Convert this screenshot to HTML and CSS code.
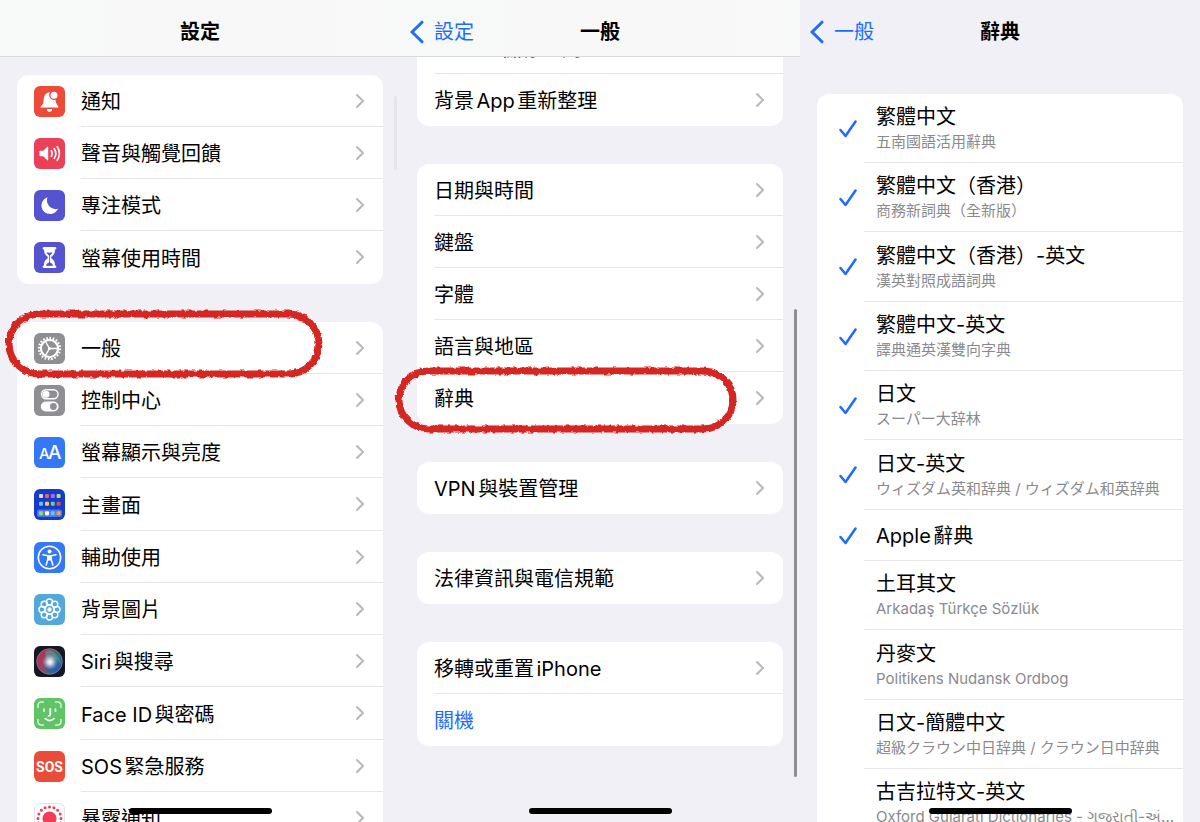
FILE: index.html
```html
<!DOCTYPE html>
<html lang="zh-Hant">
<head>
  <meta charset="UTF-8" />
  <meta name="viewport" content="width=device-width, initial-scale=1.0"/>
  <title>設定 - 辭典</title>
  <link rel="stylesheet" href="styles.css">
</head>
<body>

  <!-- shared shapes -->
  <svg class="defs" aria-hidden="true">
    <symbol id="chevron" viewBox="0 0 10 16"><path d="M2 2l6 6-6 6" fill="none" stroke="#b8b8bc" stroke-width="2" stroke-linecap="round" stroke-linejoin="round"/></symbol>
    <symbol id="back" viewBox="0 0 14 24"><path d="M12 2.2L2 12l10 9.8" fill="none" stroke="#1a6dff" stroke-width="3" stroke-linecap="round" stroke-linejoin="round"/></symbol>
    <symbol id="tick" viewBox="0 0 18 18"><path d="M1.500 10l5 6L16.500 1.500" fill="none" stroke="#1a6dff" stroke-width="2.500" stroke-linecap="round" stroke-linejoin="round"/></symbol>
    <filter id="crayon" x="-5%" y="-15%" width="110%" height="130%">
      <feTurbulence type="fractalNoise" baseFrequency="0.22" numOctaves="2" seed="4" result="noise"/>
      <feDisplacementMap in="SourceGraphic" in2="noise" scale="4" xChannelSelector="R" yChannelSelector="G"/>
    </filter>
  </svg>

  <div class="screens">

    <!-- Settings -->
    <section class="screen">
      <header class="bar bar-tint">
        <h1>設定</h1>
      </header>
      <div class="content content-settings">
        <nav class="card with-icons">
          <a class="row" href="#">
            <svg class="icon red" viewBox="0 0 31 31"><path d="M6.500 21.500c0-1.200 2.800-2.500 3-6C9.700 9.500 11.500 6.700 16 6.200a5 5 0 0 0 5.500 7.600c.3 4.500 3 6.200 3 7.700z" fill="#fff"/><circle cx="20" cy="9.300" r="3.500" fill="#fff"/><path d="M12.800 23h5.400a2.700 2.700 0 0 1-5.400 0z" fill="#fff"/></svg>
            <span class="label">通知<svg class="chevron"><use href="#chevron"/></svg></span>
          </a>
          <a class="row" href="#">
            <svg class="icon pink" viewBox="0 0 31 31"><path d="M5.500 13.500q0-.8.800-.8h3l4-3.900q.9-.7.900.4v12.600q0 1.100-.9.400l-4-3.900h-3q-.8 0-.8-.8z" fill="#fff"/><path d="M17.300 12.700q1.700 2.800 0 5.600M20.300 10.700q3 4.800 0 9.600M23.300 8.700q4.200 6.800 0 13.600" fill="none" stroke="#fff" stroke-width="1.700" stroke-linecap="round"/></svg>
            <span class="label">聲音與觸覺回饋<svg class="chevron"><use href="#chevron"/></svg></span>
          </a>
          <a class="row" href="#">
            <svg class="icon purple" viewBox="0 0 31 31"><path d="M13.500 7.200A8.600 8.600 0 1 0 24 18.800 8.800 8.800 0 0 1 13.500 7.200z" fill="#fff"/></svg>
            <span class="label">專注模式<svg class="chevron"><use href="#chevron"/></svg></span>
          </a>
          <a class="row" href="#">
            <svg class="icon purple" viewBox="0 0 31 31"><path d="M10 5h11q1.400 0 1.400 1.200T21 7.500c0 4-1.300 5.500-3.700 7.200v1.600c2.400 1.700 3.700 3.200 3.700 7.200q1.400.1 1.400 1.300T21 26H10q-1.400 0-1.400-1.200T10 23.500c0-4 1.300-5.500 3.700-7.200v-1.600C11.300 13 10 11.500 10 7.500q-1.400-.1-1.400-1.300T10 5z" fill="#fff"/><path d="M12.800 11h5.400L15.500 13.500zM15.500 13v8M12.500 23.500q0-2 3-3 3 1 3 3z" fill="#5553cf" stroke="#5553cf" stroke-width=".8"/></svg>
            <span class="label">螢幕使用時間<svg class="chevron"><use href="#chevron"/></svg></span>
          </a>
        </nav>

        <nav class="card with-icons">
          <a class="row marked" href="#general">
            <svg class="icon gray" viewBox="0 0 31 31"><g fill="none" stroke="#fff"><circle cx="15.500" cy="15.500" r="10.600" stroke-width="2.200" pathLength="40" stroke-dasharray="1 1"/><circle cx="15.500" cy="15.500" r="8.600" stroke-width="2.200"/><path d="M15.500 15.500h8M15.500 15.500l-4-7M15.500 15.500l-4 7" stroke-width="1.500"/></g><circle cx="15.500" cy="15.500" r="1.500" fill="#fff"/></svg>
            <span class="label">一般<svg class="chevron"><use href="#chevron"/></svg></span>
            <svg class="scribble" aria-hidden="true"><rect x="6" y="6" rx="31"/></svg>
          </a>
          <a class="row" href="#">
            <svg class="icon gray" viewBox="0 0 31 31"><rect x="7.500" y="4.700" width="16.500" height="9" rx="4.500" fill="none" stroke="#fff" stroke-width="1.400"/><circle cx="12" cy="9.200" r="3.500" fill="#fff"/><rect x="6.800" y="16.500" width="17.800" height="10" rx="5" fill="#fff"/><circle cx="19.400" cy="21.500" r="3.400" fill="#8e8e93"/></svg>
            <span class="label">控制中心<svg class="chevron"><use href="#chevron"/></svg></span>
          </a>
          <a class="row" href="#">
            <svg class="icon blue" viewBox="0 0 31 31"><text x="5" y="22" font-size="15">A</text><text x="14" y="22" font-size="19">A</text></svg>
            <span class="label">螢幕顯示與亮度<svg class="chevron"><use href="#chevron"/></svg></span>
          </a>
          <a class="row" href="#">
            <svg class="icon navy" viewBox="0 0 31 31">
              <rect x="3" y="20.500" width="25" height="7.500" rx="2" fill="#5577e5"/>
              <g><rect x="5" y="5" width="4" height="4" rx="1" fill="#e8dbe8"/><rect x="11" y="5" width="4" height="4" rx="1" fill="#f0605c"/><rect x="16.800" y="5" width="4" height="4" rx="1" fill="#b565ed"/><rect x="22.600" y="5" width="4" height="4" rx="1" fill="#b7e34c"/>
              <rect x="5" y="12.700" width="4" height="4" rx="1" fill="#63c5f5"/><rect x="11" y="12.700" width="4" height="4" rx="1" fill="#f7cd46"/><rect x="16.800" y="12.700" width="4" height="4" rx="1" fill="#63d684"/><rect x="22.600" y="12.700" width="4" height="4" rx="1" fill="#ee4a3a"/>
              <rect x="5" y="22.200" width="4" height="4" rx="1" fill="#80e66b"/><rect x="11" y="22.200" width="4" height="4" rx="1" fill="#fff"/><rect x="16.800" y="22.200" width="4" height="4" rx="1" fill="#63c5f5"/><rect x="22.600" y="22.200" width="4" height="4" rx="1" fill="#f3a23c"/></g>
            </svg>
            <span class="label">主畫面<svg class="chevron"><use href="#chevron"/></svg></span>
          </a>
          <a class="row" href="#">
            <svg class="icon blue" viewBox="0 0 31 31"><circle cx="15.500" cy="15.500" r="11.200" fill="none" stroke="#fff" stroke-width="1.500"/><circle cx="15.500" cy="9.500" r="2" fill="#fff"/><path d="M9 12.700l4.800 1.100v3.500L12.200 23M22 12.700l-4.800 1.100v3.500l1.600 5.700" fill="none" stroke="#fff" stroke-width="1.500" stroke-linecap="round" stroke-linejoin="round"/><path d="M13.300 13h4.400v5.500h-4.400z" fill="#fff"/></svg>
            <span class="label">輔助使用<svg class="chevron"><use href="#chevron"/></svg></span>
          </a>
          <a class="row" href="#">
            <svg class="icon sky" viewBox="0 0 31 31"><g fill="none" stroke="#fff" stroke-width="1.400"><circle cx="15.500" cy="8" r="3"/><circle cx="20.800" cy="10.200" r="3"/><circle cx="23" cy="15.500" r="3"/><circle cx="20.800" cy="20.800" r="3"/><circle cx="15.500" cy="23" r="3"/><circle cx="10.200" cy="20.800" r="3"/><circle cx="8" cy="15.500" r="3"/><circle cx="10.200" cy="10.200" r="3"/><circle cx="15.500" cy="15.500" r="4.600"/></g><circle cx="15.500" cy="15.500" r="2.200" fill="#fff"/></svg>
            <span class="label">背景圖片<svg class="chevron"><use href="#chevron"/></svg></span>
          </a>
          <a class="row" href="#">
            <svg class="icon siri" viewBox="0 0 31 31">
              <defs>
                <radialGradient id="glow"><stop offset="0" stop-color="#fff"/><stop offset=".35" stop-color="#e6eff5" stop-opacity=".8"/><stop offset="1" stop-color="#8fb5d0" stop-opacity="0"/></radialGradient>
                <linearGradient id="orb" x1="0" y1=".3" x2="1" y2=".7"><stop offset="0" stop-color="#c02a55"/><stop offset=".45" stop-color="#8b4a62"/><stop offset=".7" stop-color="#31747c"/><stop offset="1" stop-color="#2d5aa0"/></linearGradient>
              </defs>
              <circle cx="15.500" cy="15.500" r="12.800" fill="url(#orb)" stroke="#6c8d95" stroke-width=".8"/>
              <path d="M12 5Q17 3 21 7t6 11q-5-7-11-5T12 5z" fill="#54a39a" opacity=".6"/>
              <path d="M9 17q4 3 8 0t10 2q-3 8-10 8-6-2-8-10z" fill="#3156b6" opacity=".65"/>
              <circle cx="16" cy="16" r="8" fill="url(#glow)"/>
            </svg>
            <span class="label">Siri與搜尋<svg class="chevron"><use href="#chevron"/></svg></span>
          </a>
          <a class="row" href="#">
            <svg class="icon green" viewBox="0 0 31 31"><g fill="none" stroke="#fff" stroke-width="1.500" stroke-linecap="round" stroke-linejoin="round"><path stroke="#d9f3da" d="M4 9.500V7.500Q4 4 7.500 4h2M21.500 4h2Q27 4 27 7.500v2M27 21.500v2q0 3.500-3.500 3.500h-2M9.500 27h-2Q4 27 4 23.500v-2"/><path d="M10 11.200v2M21.500 11.200v2M16.300 11v5.500q0 1.500-1.800 1.300M11.300 20.700q4.300 3.800 8.600 0" stroke-width="1.800"/></g></svg>
            <span class="label">Face ID與密碼<svg class="chevron"><use href="#chevron"/></svg></span>
          </a>
          <a class="row" href="#">
            <svg class="icon red" viewBox="0 0 31 31"><text class="sos" x="15.500" y="21" font-size="14" text-anchor="middle">SOS</text></svg>
            <span class="label">SOS緊急服務<svg class="chevron"><use href="#chevron"/></svg></span>
          </a>
          <a class="row" href="#">
            <svg class="icon white" viewBox="0 0 31 31"><circle cx="15.500" cy="15.500" r="7" fill="#ee3e56"/><circle cx="15.500" cy="15.500" r="11.500" fill="none" stroke="#ee3e56" stroke-width="3" stroke-linecap="round" pathLength="160" stroke-dasharray="0 10"/></svg>
            <span class="label">暴露通知<svg class="chevron"><use href="#chevron"/></svg></span>
          </a>
        </nav>
      </div>
      <div class="scrollbar faint"></div>
      <div class="home-indicator"></div>
    </section>

    <!-- General -->
    <section class="screen" id="general">
      <header class="bar bar-tint">
        <a class="back" href="#"><svg><use href="#back"/></svg>設定</a>
        <h1>一般</h1>
      </header>
      <div class="content content-general">
        <nav class="card">
          <a class="row" href="#"><span class="label">iPhone儲存空間<svg class="chevron"><use href="#chevron"/></svg></span></a>
          <a class="row" href="#"><span class="label">背景App重新整理<svg class="chevron"><use href="#chevron"/></svg></span></a>
        </nav>
        <nav class="card">
          <a class="row" href="#"><span class="label">日期與時間<svg class="chevron"><use href="#chevron"/></svg></span></a>
          <a class="row" href="#"><span class="label">鍵盤<svg class="chevron"><use href="#chevron"/></svg></span></a>
          <a class="row" href="#"><span class="label">字體<svg class="chevron"><use href="#chevron"/></svg></span></a>
          <a class="row" href="#"><span class="label">語言與地區<svg class="chevron"><use href="#chevron"/></svg></span></a>
          <a class="row marked" href="#dictionary">
            <span class="label">辭典<svg class="chevron"><use href="#chevron"/></svg></span>
            <svg class="scribble wide" aria-hidden="true"><rect x="6" y="6" rx="30"/></svg>
          </a>
        </nav>
        <nav class="card">
          <a class="row" href="#"><span class="label">VPN與裝置管理<svg class="chevron"><use href="#chevron"/></svg></span></a>
        </nav>
        <nav class="card">
          <a class="row" href="#"><span class="label">法律資訊與電信規範<svg class="chevron"><use href="#chevron"/></svg></span></a>
        </nav>
        <div class="card">
          <a class="row" href="#"><span class="label">移轉或重置iPhone<svg class="chevron"><use href="#chevron"/></svg></span></a>
          <button class="row power" type="button"><span class="label">關機</span></button>
        </div>
      </div>
      <div class="scrollbar"></div>
      <div class="home-indicator"></div>
    </section>

    <!-- Dictionary -->
    <section class="screen" id="dictionary">
      <header class="bar">
        <a class="back" href="#general"><svg><use href="#back"/></svg>一般</a>
        <h1>辭典</h1>
      </header>
      <div class="content content-dictionary">
        <div class="card">
          <label class="dict"><input type="checkbox" checked><svg class="tick"><use href="#tick"/></svg><span class="text">繁體中文<small>五南國語活用辭典</small></span></label>
          <label class="dict"><input type="checkbox" checked><svg class="tick"><use href="#tick"/></svg><span class="text">繁體中文（香港）<small>商務新詞典（全新版）</small></span></label>
          <label class="dict"><input type="checkbox" checked><svg class="tick"><use href="#tick"/></svg><span class="text">繁體中文（香港）-英文<small>漢英對照成語詞典</small></span></label>
          <label class="dict"><input type="checkbox" checked><svg class="tick"><use href="#tick"/></svg><span class="text">繁體中文-英文<small>譯典通英漢雙向字典</small></span></label>
          <label class="dict"><input type="checkbox" checked><svg class="tick"><use href="#tick"/></svg><span class="text">日文<small lang="ja">スーパー大辞林</small></span></label>
          <label class="dict"><input type="checkbox" checked><svg class="tick"><use href="#tick"/></svg><span class="text">日文-英文<small lang="ja">ウィズダム英和辞典 / ウィズダム和英辞典</small></span></label>
          <label class="dict single"><input type="checkbox" checked><svg class="tick"><use href="#tick"/></svg><span class="text">Apple辭典</span></label>
          <label class="dict"><input type="checkbox"><svg class="tick"><use href="#tick"/></svg><span class="text">土耳其文<small>Arkadaş Türkçe Sözlük</small></span></label>
          <label class="dict"><input type="checkbox"><svg class="tick"><use href="#tick"/></svg><span class="text">丹麥文<small>Politikens Nudansk Ordbog</small></span></label>
          <label class="dict"><input type="checkbox"><svg class="tick"><use href="#tick"/></svg><span class="text">日文-簡體中文<small lang="ja">超級クラウン中日辞典 / クラウン日中辞典</small></span></label>
          <label class="dict"><input type="checkbox"><svg class="tick"><use href="#tick"/></svg><span class="text">古吉拉特文-英文<small>Oxford Gujarati Dictionaries - ગુજરાતી-અં...</small></span></label>
        </div>
      </div>
      <div class="home-indicator"></div>
    </section>

  </div>
</body>
</html>
```
FILE: styles.css
```css
* {
  box-sizing: border-box;
}
body {
  margin: 0;
  font-family: Inter, "Noto Sans CJK TC", sans-serif;
  font-size: 20px;
  color: #000;
  background: #f1f0f6;
  text-autospace: normal;
}
a {
  color: inherit;
  text-decoration: none;
}
.defs {
  position: absolute;
  width: 0;
  height: 0;
}
.screens {
  display: flex;
  height: 100vh;
  overflow: hidden;
}
.screen {
  position: relative;
  flex: 1;
  min-width: 0;
}

/* top bar */
.bar {
  position: absolute;
  top: 0;
  left: 0;
  right: 0;
  z-index: 1;
  display: grid;
  grid-template-columns: 1fr auto 1fr;
  align-items: center;
  height: 57px;
  padding: 7px 10px 0;
}
.bar-tint {
  background: linear-gradient(90deg, #f7faf8, #f8f8f8 30%, #f8f8f8 80%, #f8faf9);
  border-bottom: 1px solid #d8d8da;
}
.bar h1 {
  grid-column: 2;
  margin: 0;
  font-size: 20px;
  font-weight: 600;
  line-height: 26px;
}
.back {
  display: flex;
  align-items: center;
  gap: 10px;
  line-height: 26px;
  color: #1a6dff;
}
.back svg {
  width: 14px;
  height: 24px;
}

/* grouped lists */
.content {
  display: flex;
  flex-direction: column;
  gap: 38px;
  height: 100%;
  padding: 0 17px;
}
.content-settings {
  padding-top: 75px;
}
.content-general {
  padding-top: 22px;
}
.content-dictionary {
  padding-top: 94px;
}
.card {
  flex-shrink: 0;
  background: #fff;
  border-radius: 12px;
}
.row {
  position: relative;
  display: flex;
  align-items: center;
  gap: 16px;
  width: 100%;
  height: 52px;
  padding: 0 0 0 17px;
}
.with-icons .row:nth-child(4n) {
  height: 53px;
}
.label {
  flex: 1;
  display: flex;
  align-items: center;
  justify-content: space-between;
  height: 100%;
  padding-right: 18px;
  border-bottom: 1px solid #e6e6e8;
  white-space: nowrap;
}
.row:last-child .label {
  border-bottom-color: transparent;
}
.chevron {
  width: 10px;
  height: 16px;
}
.power {
  border: none;
  background: none;
  font: inherit;
  color: #1a6dff;
  cursor: pointer;
}

/* app icons */
.icon {
  width: 31px;
  height: 31px;
  border-radius: 6px;
}
.icon text {
  fill: #fff;
  font-family: Inter, sans-serif;
  font-weight: 500;
}
.icon .sos {
  font-family: Roboto, sans-serif;
  font-weight: 700;
}
.red { background: #eb4b39; }
.pink { background: #ea4159; }
.purple { background: #5553cf; }
.gray { background: #8e8e93; }
.blue { background: #3478f6; }
.navy { background: #143bd0; }
.sky { background: #54a7da; }
.siri { background: #191624; }
.green { background: #5fc466; }
.white { background: #fff; box-shadow: inset 0 0 0 1px #e4e4e6; }

/* red marker circles */
.marked {
  z-index: 1;
}
.scribble {
  position: absolute;
  top: -14px;
  left: -14px;
  width: 322px;
  height: 72px;
  overflow: visible;
  pointer-events: none;
}
.scribble.wide {
  top: -7px;
  left: -24px;
  width: 346px;
  height: 70px;
}
.scribble rect {
  width: calc(100% - 12px);
  height: calc(100% - 12px);
  fill: none;
  stroke: #d62824;
  stroke-width: 7px;
  filter: url(#crayon);
}

/* dictionaries */
.dict {
  display: grid;
  grid-template-columns: 47px 1fr;
  align-items: center;
  height: 69px;
}
.dict:nth-child(3n) {
  height: 70px;
}
.dict.single {
  height: 51px;
}
.dict input,
.tick {
  grid-area: 1 / 1;
  width: 18px;
  height: 18px;
  margin: 0 0 0 22px;
}
.dict input {
  appearance: none;
}
.tick {
  visibility: hidden;
}
.dict input:checked + .tick {
  visibility: visible;
}
.text {
  display: flex;
  flex-direction: column;
  justify-content: center;
  min-width: 0;
  height: 100%;
  padding: 2px 0 0 12px;
  border-bottom: 1px solid #e6e6e8;
  line-height: 26px;
  white-space: nowrap;
}
.text small {
  overflow: hidden;
  font-size: 15px;
  line-height: 24px;
  color: #8a8a8e;
}
.text small:lang(ja) {
  font-family: Inter, "Noto Sans CJK JP", sans-serif;
}

.scrollbar {
  position: absolute;
  top: 309px;
  bottom: 45px;
  right: 3px;
  width: 3px;
  border-radius: 2px;
  background: #8e8e92;
}
.scrollbar.faint {
  top: 96px;
  bottom: auto;
  height: 74px;
  background: #e6e6ea;
}
.home-indicator {
  position: absolute;
  bottom: 8px;
  left: 50%;
  z-index: 2;
  width: 143px;
  height: 6px;
  margin-left: -71px;
  border-radius: 3px;
  background: #000;
}
```
